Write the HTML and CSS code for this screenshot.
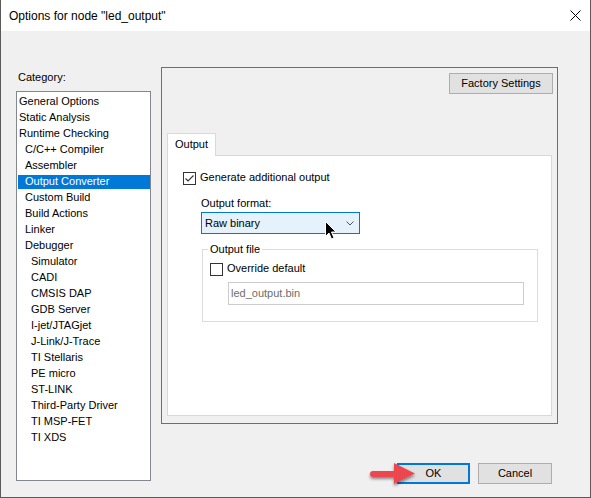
FILE: index.html
```html
<!DOCTYPE html>
<html>
<head>
<meta charset="utf-8">
<link rel="stylesheet" href="styles.css">
</head>
<body>
<div class="window">
  <div class="titlebar">
    <span class="title">Options for node "led_output"</span>
    <svg class="close" width="11" height="11" viewBox="0 0 11 11"><path d="M0.5 0.5L10.5 10.5M10.5 0.5L0.5 10.5" stroke="#000" stroke-width="1"/></svg>
  </div>
  <div class="body">
    <div class="leftcol">
      <div class="cat-label">Category:</div>
      <ul class="list">
        <li class="l0">General Options</li>
        <li class="l0">Static Analysis</li>
        <li class="l0">Runtime Checking</li>
        <li class="l1">C/C++ Compiler</li>
        <li class="l1">Assembler</li>
        <li class="l1 sel">Output Converter</li>
        <li class="l1">Custom Build</li>
        <li class="l1">Build Actions</li>
        <li class="l1">Linker</li>
        <li class="l1">Debugger</li>
        <li class="l2">Simulator</li>
        <li class="l2">CADI</li>
        <li class="l2">CMSIS DAP</li>
        <li class="l2">GDB Server</li>
        <li class="l2">I-jet/JTAGjet</li>
        <li class="l2">J-Link/J-Trace</li>
        <li class="l2">TI Stellaris</li>
        <li class="l2">PE micro</li>
        <li class="l2">ST-LINK</li>
        <li class="l2">Third-Party Driver</li>
        <li class="l2">TI MSP-FET</li>
        <li class="l2">TI XDS</li>
      </ul>
    </div>
    <div class="rightcol">
      <div class="panel">
        <div class="factory-row"><div class="btn factory">Factory Settings</div></div>
        <div class="tabs">
          <div class="tab-head">Output</div>
          <div class="tab-panel">
            <div class="check-row gen">
              <span class="checkbox"><svg width="11" height="11" viewBox="0 0 11 11"><path d="M1.5 5.5L4 8L9.5 2.5" fill="none" stroke="#333" stroke-width="1.1"/></svg></span>
              <span class="check-text">Generate additional output</span>
            </div>
            <div class="fmt-label">Output format:</div>
            <div class="combo">
              <span>Raw binary</span>
              <svg class="chev" width="8" height="5" viewBox="0 0 8 5"><path d="M0.5 0.5L4 4L7.5 0.5" fill="none" stroke="#555" stroke-width="1"/></svg>
            </div>
            <fieldset class="group">
              <legend>Output file</legend>
              <div class="check-row ovr">
                <span class="checkbox"></span>
                <span class="check-text">Override default</span>
              </div>
              <div class="textbox">led_output.bin</div>
            </fieldset>
          </div>
        </div>
      </div>
      <div class="buttons">
        <div class="btn ok">OK</div>
        <div class="btn cancel">Cancel</div>
      </div>
    </div>
  </div>
  <svg class="arrow" width="60" height="34" viewBox="0 0 60 34">
    <defs>
      <filter id="sh" x="-20%" y="-30%" width="140%" height="170%">
        <feDropShadow dx="0" dy="2" stdDeviation="1.6" flood-color="#000" flood-opacity="0.45"/>
      </filter>
    </defs>
    <g filter="url(#sh)">
      <path d="M9 12 L32 12 L32 18 L9 18 A3 3 0 0 1 9 12 Z" fill="#ec4750"/>
      <path d="M30 4 L51 14.5 L30 25 Z" fill="#ec4750"/>
    </g>
  </svg>
  <svg class="cursor" width="14" height="21" viewBox="0 0 14 21">
    <path d="M1.5 1.5 L1.5 16.5 L5 13 L7.5 19 L10 18 L7.5 12 L12 12 Z" fill="#000" stroke="#fff" stroke-width="1" stroke-linejoin="miter"/>
  </svg>
</div>
</body>
</html>
```

FILE: styles.css
```css
html, body {
  margin: 0;
  padding: 0;
  background: #f0f0f0;
}

body {
  font-family: "Liberation Sans", Arial, sans-serif;
  font-size: 11px;
  color: #000;
}

.window {
  position: relative;
  width: 591px;
  height: 498px;
  box-sizing: border-box;
  border: 1px solid #5a5a5a;
  border-top: none;
  background: #f0f0f0;
  overflow: hidden;
}

.titlebar {
  height: 31px;
  background: #fff;
  display: flex;
  align-items: center;
  justify-content: space-between;
  padding: 0 9px 0 8px;
}

.title {
  font-size: 12px;
  line-height: 14px;
  margin-top: 1px;
}

.close {
  display: block;
  margin-top: 0;
}

.body {
  display: flex;
  gap: 10px;
  padding: 36px 0 0 15px;
}

.leftcol {
  width: 135px;
  padding-top: 3px;
}

.cat-label {
  line-height: 14px;
  padding-left: 2px;
  margin-bottom: 7px;
}

.list {
  margin: 0;
  padding: 1px 0 1px 1px;
  list-style: none;
  border: 1px solid #828790;
  background: #fff;
  height: 390px;
  box-sizing: border-box;
}

.list li {
  height: 16px;
  line-height: 16px;
  white-space: nowrap;
}

.list li.l0 { padding-left: 1px; }
.list li.l1 { padding-left: 7px; }
.list li.l2 { padding-left: 13px; }

.list li.sel {
  background: linear-gradient(to bottom, transparent 2px, #0078d7 2px);
  color: #fff;
  line-height: 17px;
}

.rightcol {
  width: 397px;
}

.panel {
  height: 357px;
  box-sizing: border-box;
  border: 1px solid #6e6e6e;
  padding: 5px 4px 0 5px;
}

.factory-row {
  display: flex;
  justify-content: flex-end;
}

.btn {
  box-sizing: border-box;
  background: #e1e1e1;
  border: 1px solid #adadad;
  text-align: center;
}

.factory {
  width: 104px;
  height: 21px;
  line-height: 19px;
}

.tabs {
  margin-top: 39px;
}

.tab-head {
  position: relative;
  z-index: 1;
  width: 49px;
  height: 23px;
  box-sizing: border-box;
  border: 1px solid #d9d9d9;
  border-bottom: none;
  background: #fff;
  padding-left: 7px;
  line-height: 21px;
  margin-bottom: -1px;
}

.tab-panel {
  width: 385px;
  height: 261px;
  box-sizing: border-box;
  border: 1px solid #d9d9d9;
  background: #fff;
}

.check-row {
  display: flex;
  align-items: center;
  height: 13px;
}

.check-row.gen {
  margin-top: 16px;
  padding-left: 15px;
}

.checkbox {
  width: 13px;
  height: 13px;
  box-sizing: border-box;
  border: 1px solid #333;
  background: #fff;
  display: flex;
  align-items: center;
  justify-content: center;
  flex: none;
}

.checkbox svg {
  display: block;
}

.check-text {
  margin-left: 4px;
  line-height: 13px;
  margin-top: -3px;
}

.fmt-label {
  margin-top: 11px;
  padding-left: 33px;
  line-height: 14px;
}

.combo {
  margin: 2px 0 0 33px;
  width: 159px;
  height: 22px;
  box-sizing: border-box;
  border: 1px solid #0078d7;
  background: #e5f1fb;
  display: flex;
  align-items: center;
  justify-content: space-between;
  padding: 0 5px 0 3px;
  line-height: 20px;
}

.chev {
  display: block;
}

.group {
  margin: 8px 0 0 34px;
  padding: 0 0 0 7px;
  width: 336px;
  height: 80px;
  box-sizing: border-box;
  border: 1px solid #dcdcdc;
  min-width: 0;
}

.group legend {
  margin-left: -2px;
  padding: 0 2px;
  line-height: 14px;
}

.check-row.ovr {
  margin-top: 7px;
}

.textbox {
  margin: 6px 0 0 18px;
  width: 296px;
  height: 23px;
  box-sizing: border-box;
  border: 1px solid #cccccc;
  background: #fff;
  color: #6d6d6d;
  line-height: 21px;
  padding-left: 2px;
}

.buttons {
  margin-top: 39px;
  display: flex;
  justify-content: flex-end;
  gap: 8px;
  padding-right: 6px;
}

.buttons .btn {
  height: 21px;
  line-height: 19px;
}

.ok {
  width: 73px;
  border: 2px solid #0078d7;
  line-height: 17px !important;
}

.cancel {
  width: 74px;
}

.arrow {
  position: absolute;
  left: 363px;
  top: 459px;
}

.cursor {
  position: absolute;
  left: 323px;
  top: 220px;
}
```
